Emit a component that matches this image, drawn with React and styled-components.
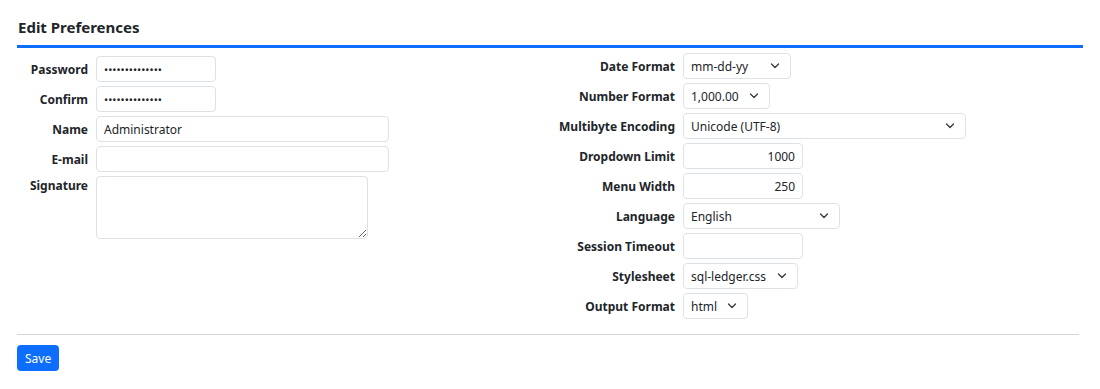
import React from 'react';
import styled, { createGlobalStyle } from 'styled-components';

const GlobalStyle = createGlobalStyle`
  body {
    margin: 0;
    background: #fff;
    font-family: "Noto Sans", "Open Sans", sans-serif;
    color: #212529;
  }
`;

const Page = styled.div`
  padding: 0 17px;
  width: 1100px;
  box-sizing: border-box;
`;

const Header = styled.div`
  padding: 15px 1px 6px;
  border-bottom: 3px solid #0d6efd;
`;

const Title = styled.h1`
  margin: 0;
  font-size: 15px;
  line-height: 24px;
  font-weight: 700;
  color: #212529;
`;

const Columns = styled.div`
  display: grid;
  grid-template-columns: 525px 1fr;
  margin-top: 5px;
`;

const FormTable = styled.div`
  display: grid;
  grid-template-columns: ${({ labelWidth }) => labelWidth}px auto;
  column-gap: 8px;
  row-gap: 4px;
  align-content: start;
  justify-items: start;
  margin-top: ${({ offset }) => offset || 0}px;
`;

const Label = styled.label`
  justify-self: end;
  align-self: ${({ top }) => (top ? 'start' : 'auto')};
  box-sizing: border-box;
  height: ${({ top }) => (top ? 'auto' : '26px')};
  padding-top: 1px;
  font-size: 12px;
  font-weight: 700;
  line-height: ${({ top }) => (top ? '18px' : '25px')};
  white-space: nowrap;
`;

const Input = styled.input`
  box-sizing: border-box;
  width: ${({ w }) => w}px;
  height: 26px;
  padding: 1px 7px 0;
  border: 1px solid #dee2e6;
  border-radius: 4px;
  font-family: inherit;
  font-size: 12px;
  color: #212529;
  text-align: ${({ right }) => (right ? 'right' : 'left')};
  outline: none;
  &[type='password'] {
    font-size: 11px;
    letter-spacing: 0;
  }
`;

const TextArea = styled.textarea`
  box-sizing: border-box;
  width: 272px;
  height: 63px;
  border: 1px solid #dee2e6;
  border-radius: 4px;
  font-family: inherit;
  font-size: 12px;
  resize: both;
`;

const SelectWrap = styled.span`
  position: relative;
  display: inline-block;
  width: ${({ w }) => w}px;
  height: 26px;
`;

const Select = styled.select`
  appearance: none;
  box-sizing: border-box;
  width: 100%;
  height: 26px;
  padding: 1px 26px 0 7px;
  border: 1px solid #dee2e6;
  border-radius: 4px;
  background: #fff;
  font-family: inherit;
  font-size: 12px;
  color: #212529;
  outline: none;
`;

const Chevron = styled.svg`
  position: absolute;
  right: 11px;
  top: 10px;
  pointer-events: none;
`;

const Divider = styled.hr`
  margin: 15px 4px 10px 0;
  border: 0;
  border-top: 1px solid #d6d6d6;
`;

const SaveButton = styled.button`
  background: #0d6efd;
  color: #fff;
  border: 0;
  border-radius: 4px;
  height: 26px;
  padding: 0 8px;
  font-family: inherit;
  font-size: 12px;
`;

function Drop({ w, value, options }) {
  return (
    <SelectWrap w={w}>
      <Select defaultValue={value}>
        {(options || [value]).map((o) => (
          <option key={o}>{o}</option>
        ))}
      </Select>
      <Chevron width="10" height="6" viewBox="0 0 10 6">
        <path d="M1.5 1l3.5 3.5 3.5-3.5" fill="none" stroke="#343a40" strokeWidth="1.3" strokeLinecap="round" strokeLinejoin="round" />
      </Chevron>
    </SelectWrap>
  );
}

export default function App() {
  return (
    <>
      <GlobalStyle />
      <Page>
        <Header>
          <Title>Edit Preferences</Title>
        </Header>
        <Columns>
          <FormTable labelWidth={71} offset={3}>
            <Label>Password</Label>
            <Input w={120} type="password" defaultValue="aaaaaaaaaaaaaa" />
            <Label>Confirm</Label>
            <Input w={120} type="password" defaultValue="aaaaaaaaaaaaaa" />
            <Label>Name</Label>
            <Input w={293} defaultValue="Administrator" />
            <Label>E-mail</Label>
            <Input w={293} />
            <Label top>Signature</Label>
            <TextArea />
          </FormTable>
          <FormTable labelWidth={133}>
            <Label>Date Format</Label>
            <Drop w={108} value="mm-dd-yy" />
            <Label>Number Format</Label>
            <Drop w={87} value="1,000.00" />
            <Label>Multibyte Encoding</Label>
            <Drop w={283} value="Unicode (UTF-8)" />
            <Label>Dropdown Limit</Label>
            <Input w={120} right defaultValue="1000" />
            <Label>Menu Width</Label>
            <Input w={120} right defaultValue="250" />
            <Label>Language</Label>
            <Drop w={157} value="English" />
            <Label>Session Timeout</Label>
            <Input w={120} />
            <Label>Stylesheet</Label>
            <Drop w={115} value="sql-ledger.css" />
            <Label>Output Format</Label>
            <Drop w={65} value="html" />
          </FormTable>
        </Columns>
        <Divider />
        <SaveButton>Save</SaveButton>
      </Page>
    </>
  );
}
